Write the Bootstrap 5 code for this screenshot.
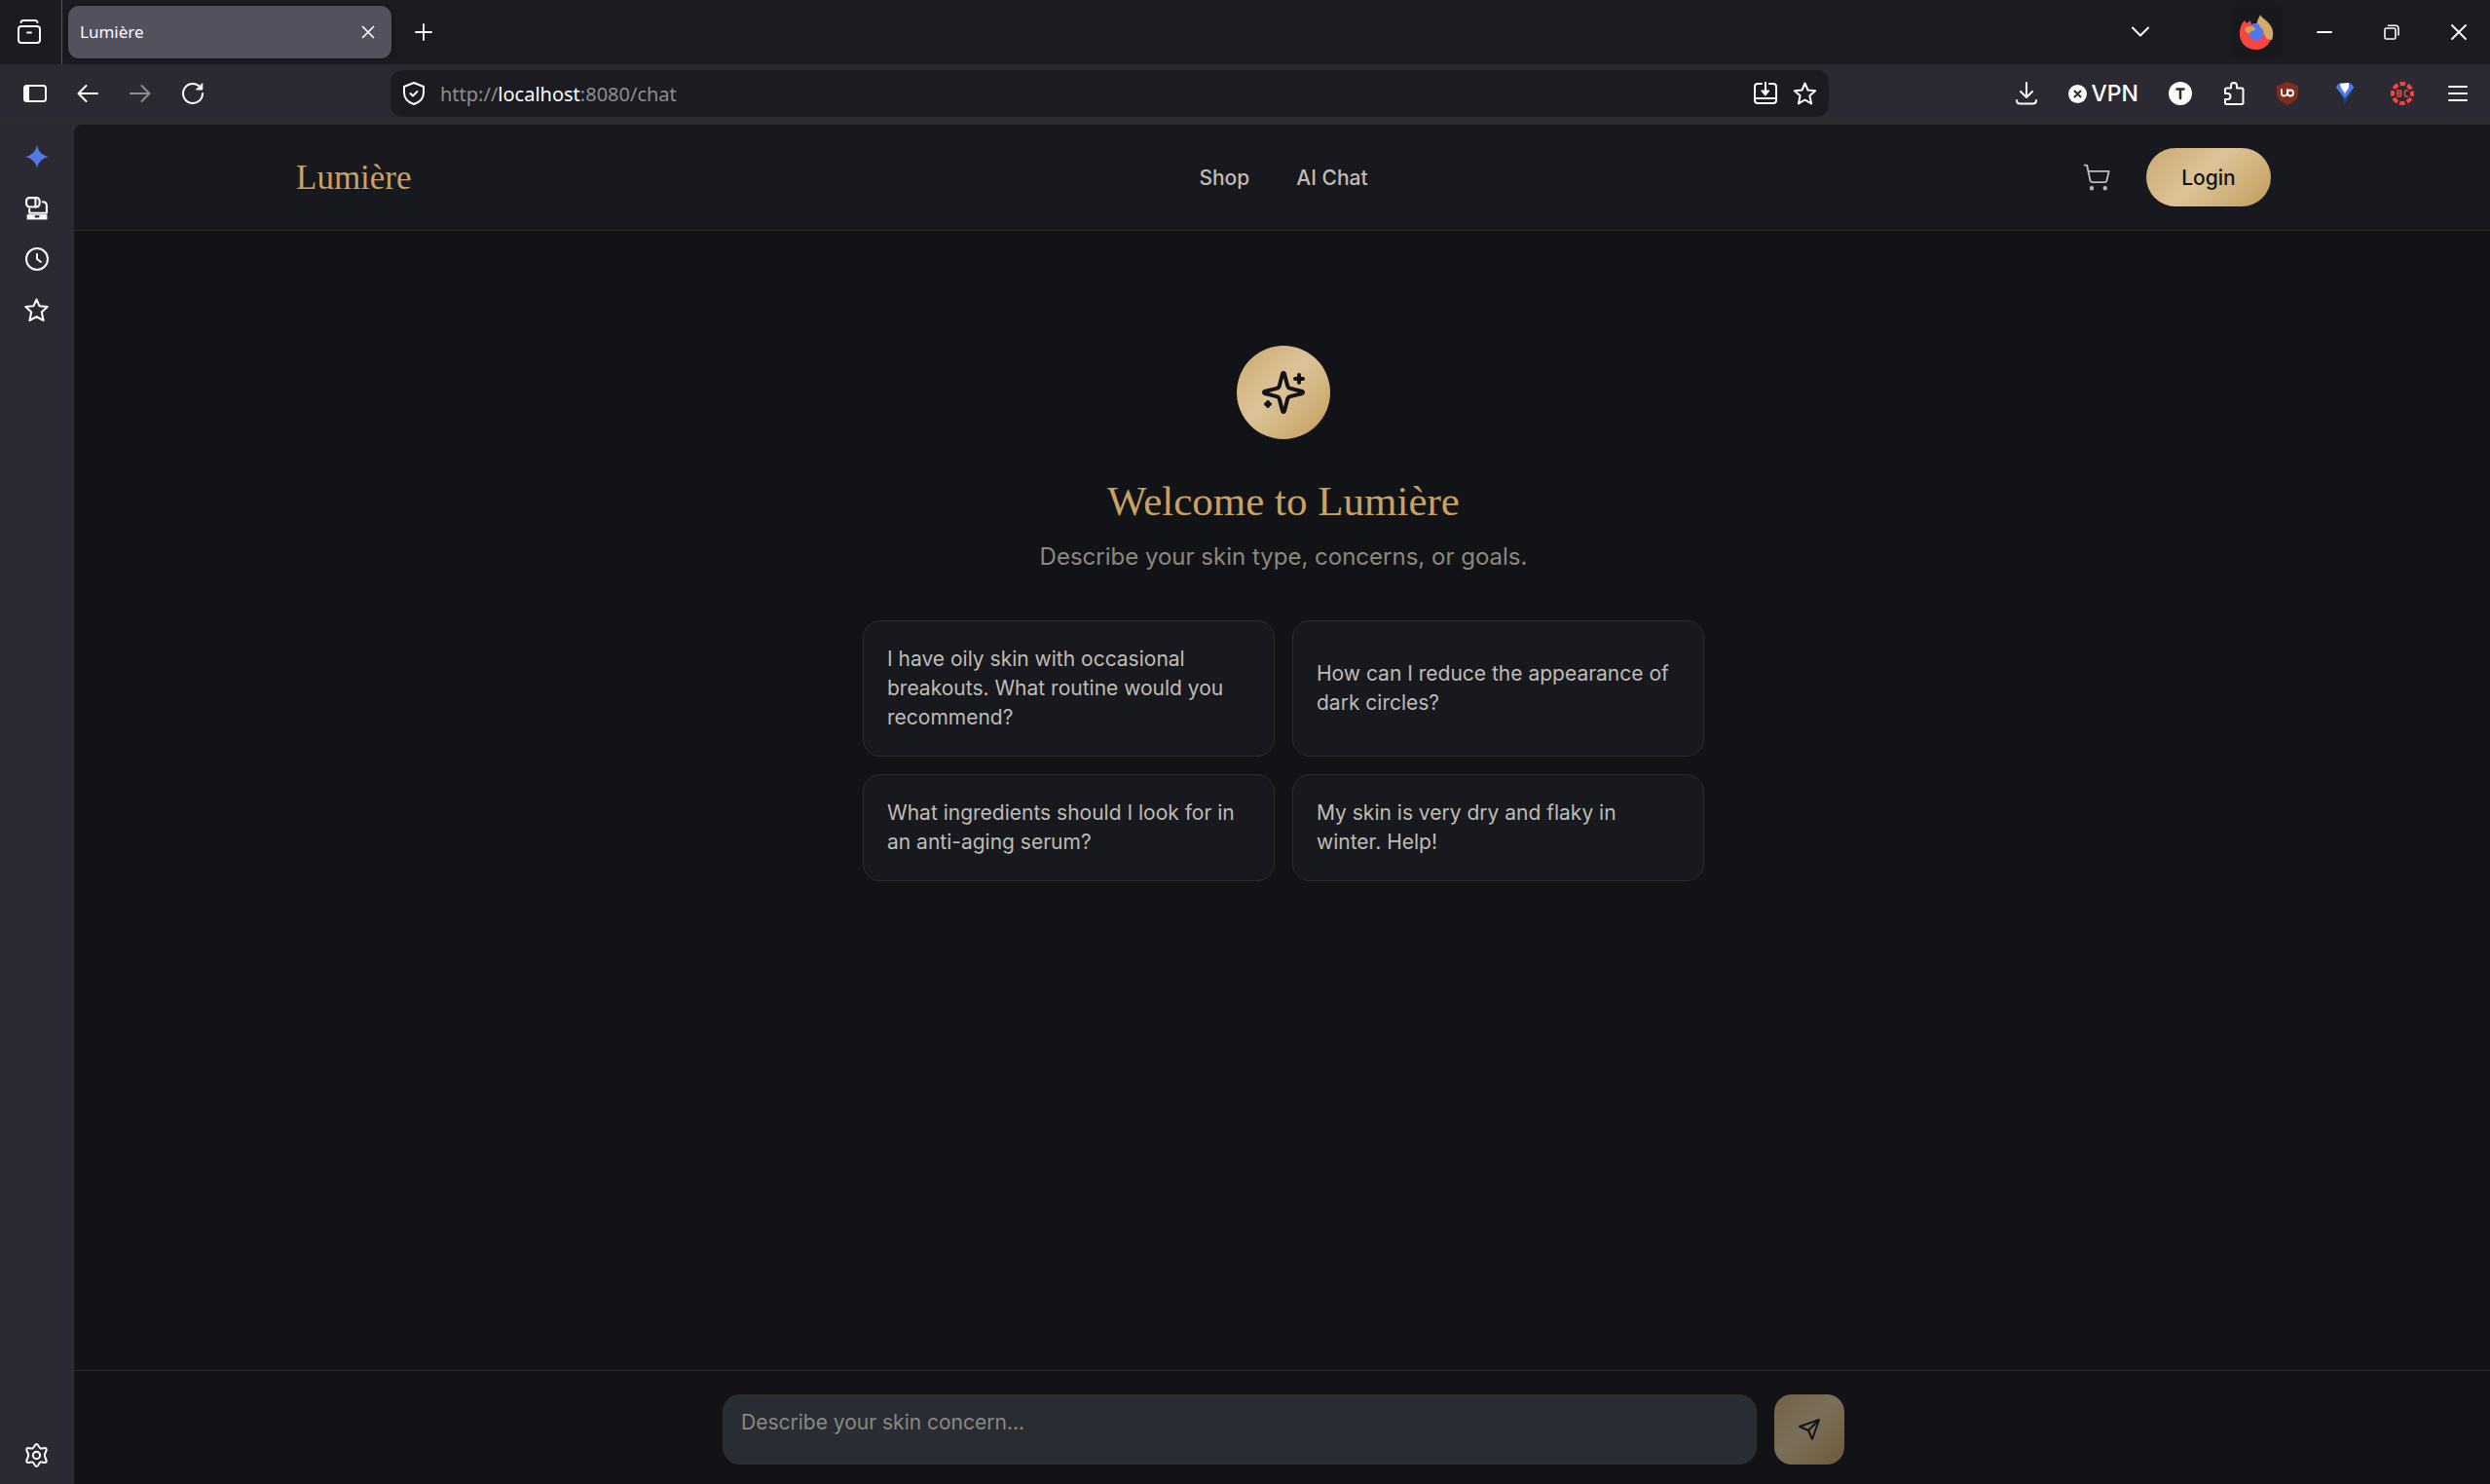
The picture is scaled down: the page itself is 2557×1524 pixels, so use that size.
<!DOCTYPE html>
<html lang="en" data-bs-theme="dark">
<head>
<meta charset="utf-8">
<meta name="viewport" content="width=device-width, initial-scale=1">
<title>Lumière</title>
<link href="https://cdn.jsdelivr.net/npm/bootstrap@5.3.0/dist/css/bootstrap.min.css" rel="stylesheet">
<style>
  :root { --gold: #c9a263; --edge: #2f2d2c; --chrome: #2b2a33; --ink: #121317; --panel: #18191e; --soft: #bfbcb5; --dim: #8d887f; }
  body { height: 100vh; overflow: hidden; background: var(--ink); color: var(--soft); font-family: Inter, "Noto Sans", sans-serif; font-size: 21px; line-height: 30px; }
  button { padding: 0; border: 0; background: none; color: inherit; }
  svg { display: block; fill: none; stroke: currentColor; stroke-linecap: round; stroke-linejoin: round; flex: none; }
  svg.solid-art { stroke: none; }
  svg.red-art { stroke: #f8453f; }
  .browser-ui { color: #fbfbfe; font-family: "Noto Sans", sans-serif; }
  .tab-strip { height: 66px; background: #1c1b22; }
  .tab-view { width: 64px; height: 66px; padding-right: 3px; border-right: 1px solid #52525e; }
  .tab-item { width: 332px; height: 54px; margin-left: 6px; padding: 0 17px 0 12px; border-radius: 11px; background: #52525e; font-size: 17px; box-shadow: 0 0 4px #0008; }
  .new-tab { margin-left: 24px; }
  .win-tools { gap: 53px; padding-right: 24px; }
  .fox-tile { width: 54px; height: 54px; margin-left: 30px; margin-right: -18px; border-radius: 9px; background: #18191d; }
  .tool-strip { height: 62px; background: var(--chrome); border-bottom: 2px solid #302d2e; }
  .nav-tools { width: 401px; gap: 30px; padding-left: 24px; }
  .url-field { width: 1477px; height: 48px; padding: 0 12px; border-radius: 12px; background: #1c1b22; font-size: 20px; }
  .url-text { margin-left: 15px; padding-top: 2px; color: #8f8d8b; }
  .url-text b { font-weight: 400; color: #fbfbfe; }
  .forward-btn { color: #8f8d8b; }
  .addons { gap: 31px; padding-right: 23px; }
  .vpn { font-family: Inter, sans-serif; font-weight: 500; gap: 5px; font-size: 23px; }
  .under-tools { background: var(--chrome); }
  .side-rail { width: 75px; background: var(--chrome); padding: 21px 0 17px; gap: 28px; color: #fbfbfe; }
  .site { background: var(--ink); min-width: 0; border-left: 1px solid #302d2e; border-top-left-radius: 9px; overflow: hidden; }
  .site-head { background: var(--panel); height: 109px; border-bottom: 1px solid var(--edge); padding-left: 3px; }
  .head-inner { width: 100%; max-width: 2028px; display: grid; grid-template-columns: 1fr auto 1fr; align-items: center; }
  .brand, .hero-title { font-family: "Liberation Serif", serif; color: var(--gold); }
  .brand { font-size: 35px; line-height: 48px; padding-top: 2px; }
  .site-nav { gap: 48px; font-weight: 500; padding-top: 2px; }
  .site-nav a { color: var(--soft); }
  .head-actions { gap: 36px; }
  .gold-fill { background: linear-gradient(135deg, #cca970 0%, #dcc398 45%, #d1b27d 70%, #c39a58 100%); color: var(--ink); }
  .login-btn { width: 128px; height: 60px; padding-top: 1px; font-weight: 500; }
  .hero { padding: 118px 0 0 3px; }
  .hero-mark { width: 96px; height: 96px; }
  .hero-title { font-size: 43px; line-height: 60px; margin: 34px 0 0; font-weight: 400; }
  .hero-sub { font-size: 24px; line-height: 36px; margin: 9px 0 47px; color: var(--dim); }
  .prompts { width: 100%; max-width: 864px; display: grid; grid-template-columns: 1fr 1fr; gap: 18px; }
  .prompt-btn { padding: 24px; border: 1px solid var(--edge); border-radius: 18px; background: var(--panel); text-align: left; }
  .composer { border-top: 1px solid #292829; padding: 24px 0 20px 3px; }
  .composer form { width: 100%; max-width: 1152px; gap: 18px; }
  .ask-box { height: 72px; padding: 13px 18px; border: 1px solid #33302f; border-radius: 18px; background: #282d33; color: var(--soft); font-size: 21px; line-height: 30px; resize: none; overflow: hidden; }
  .ask-box::placeholder { color: var(--dim); opacity: 1; }
  .send-btn { width: 72px; height: 72px; border-radius: 18px; opacity: .52; }
</style>
<script src="https://cdn.jsdelivr.net/npm/bootstrap@5.3.0/dist/js/bootstrap.bundle.min.js"></script>
</head>
<body class="d-flex flex-column">
<header class="browser-ui">
  <div class="tab-strip d-flex align-items-center">
    <button class="tab-view d-flex align-items-center justify-content-center" aria-label="Tab overview">
      <svg width="26" height="26" viewBox="0 0 26 26" stroke-width="2"><path d="M4.500 3q.5-2 2.500-2h12q2 0 2.500 2"/><rect x="2" y="7" width="22" height="17" rx="3"/><path d="M11 13.500h4"/></svg>
    </button>
    <div class="tab-item d-flex align-items-center justify-content-between">
      <span>Lumière</span>
      <button aria-label="Close tab"><svg width="14" height="14" viewBox="0 0 14 14" stroke-width="1.700"><path d="M1.500 1.500l11 11m0-11l-11 11"/></svg></button>
    </div>
    <button class="new-tab" aria-label="New tab"><svg width="18" height="18" viewBox="0 0 18 18" stroke-width="1.800"><path d="M9 1v16M1 9h16"/></svg></button>
    <div class="win-tools d-flex align-items-center ms-auto">
      <button aria-label="List tabs"><svg width="18" height="12" viewBox="0 0 18 12" stroke-width="2"><path d="M1 1.500l8 8 8-8"/></svg></button>
      <button class="fox-tile d-flex align-items-center justify-content-center" aria-label="Firefox">
        <svg class="solid-art" width="36" height="36" viewBox="0 0 36 36"><path d="M6 6l2 3 4-3 1 4 9-2 12 6c2 12-5 22-16 22S0 28 1 18C1 13 3 9 6 6z" fill="#f8453f"/><path d="M22 0c2 4 6 5 9 9 5 6 5 12 3 17l-5-1-5-8-5-7c-1-4 2-6 3-10z" fill="#d0a96b"/><circle cx="18" cy="19" r="7.500" fill="#5078e8"/><path d="M12 11c4-3 8-2 10 0-2 1-1 3-1 5l-9-1z" fill="#5078e8"/><path d="M6 14c5-4 11-2 11 1-1 2-5 1-6 5-3-1-5-3-5-6z" fill="#d0a060"/></svg>
      </button>
      <button aria-label="Minimize"><svg width="16" height="16" viewBox="0 0 16 16" stroke-width="2"><path d="M1 8h14"/></svg></button>
      <button aria-label="Restore"><svg width="16" height="16" viewBox="0 0 16 16" stroke-width="1.600"><rect x="1" y="4" width="11" height="11" rx="1.500"/><path d="M4.500 1.200H12q3 0 3 3V11"/></svg></button>
      <button aria-label="Close window"><svg width="16" height="16" viewBox="0 0 16 16" stroke-width="1.800"><path d="M1 1l14 14M15 1L1 15"/></svg></button>
    </div>
  </div>
  <div class="tool-strip d-flex align-items-center">
    <div class="nav-tools d-flex align-items-center">
      <button aria-label="Sidebar"><svg width="24" height="24" viewBox="0 0 24 24" stroke-width="2"><rect x="1" y="4" width="22" height="16" rx="2.500"/><path d="M2 5h4v14H2z" fill="currentColor" stroke="none"/></svg></button>
      <button aria-label="Back"><svg width="24" height="24" viewBox="0 0 24 24" stroke-width="2"><path d="M22 12H2.500M10.500 4l-8 8 8 8"/></svg></button>
      <button class="forward-btn" aria-label="Forward"><svg width="24" height="24" viewBox="0 0 24 24" stroke-width="2"><path d="M2 12h19.500M13.500 4l8 8-8 8"/></svg></button>
      <button aria-label="Reload"><svg width="24" height="24" viewBox="0 0 24 24" stroke-width="2"><path d="M22 12a10 10 0 1 1-4-8"/><path d="M21.800 2v6h-6z" fill="currentColor" stroke-width="1"/></svg></button>
    </div>
    <div class="url-field d-flex align-items-center">
      <svg width="24" height="24" viewBox="0 0 24 24" stroke-width="2"><path d="M12 1l10 4v6c0 6-4 10-10 12C6 21 2 17 2 11V5z"/><path d="M8.500 12l2.500 2.500 4.500-4.500"/></svg>
      <span class="url-text">http://<b>localhost</b>:8080/chat</span>
      <button class="ms-auto me-3" aria-label="Install page"><svg width="24" height="24" viewBox="0 0 24 24" stroke-width="2"><path d="M8 2H4Q1 2 1 5v14q0 3 3 3h16q3 0 3-3V5q0-3-3-3h-4M2 17h20M12 0v11"/><path d="M8 9h8l-4 5z" fill="currentColor" stroke-width="1"/></svg></button>
      <button aria-label="Bookmark"><svg width="25" height="24" viewBox="0 0 24 24" stroke-width="2"><path d="M12 1.500l3 7 7.700.7-5.800 5 1.700 8.200L12 18.500l-6.600 3.900 1.700-8.200-5.800-5L9 8.500z"/></svg></button>
    </div>
    <div class="addons d-flex align-items-center ms-auto">
      <button aria-label="Downloads"><svg width="24" height="24" viewBox="0 0 24 24" stroke-width="2"><path d="M12 1v15M6 10l6 6 6-6M2 19q0 3.500 3.500 3.500h13Q22 22.500 22 19"/></svg></button>
      <button class="vpn d-flex align-items-center"><svg width="19" height="19" viewBox="0 0 19 19" stroke-width="2"><circle cx="9.500" cy="9.500" r="9.500" fill="#fbfbfe" stroke="none"/><path d="M6.500 6.500l6 6m0-6l-6 6" stroke="#2b2a33"/></svg>VPN</button>
      <button aria-label="T"><svg width="24" height="24" viewBox="0 0 24 24" stroke-width="2.500"><circle cx="12" cy="12" r="12" fill="#fbfbfe" stroke="none"/><path d="M8.500 7.500h7M12 8v9" stroke="#2b2a33"/></svg></button>
      <button aria-label="Extensions"><svg width="24" height="24" viewBox="0 0 24 24" stroke-width="2"><path d="M3 10V8q0-1.500 1.500-1.500H9V4a3 3 0 0 1 6 0v2.500h5q1.500 0 1.500 1.500v13.500q0 1.500-1.500 1.500H4.500Q3 23 3 21.500V18h2.500a3 3 0 0 0 0-6H3z"/></svg></button>
      <button aria-label="uBlock"><svg width="24" height="24" viewBox="0 0 24 24" stroke-width="1.800"><path d="M12 0l11 4v8c0 6-5 9-11 12C6 21 1 18 1 12V4z" fill="#802d1b" stroke="none"/><path d="M6 8v4q0 2.500 2.500 2.500T12 12V8"/><circle cx="15" cy="11.500" r="3"/></svg></button>
      <button class="ms-1" aria-label="Gem"><svg class="solid-art" width="24" height="24" viewBox="0 0 24 24"><path d="M4 3l8-2 10 4-10 18z" fill="#174766"/><path d="M3 6q1-4 5-5h8q4 1 5 5l-9 11z" fill="#5078e8"/><path d="M7 2l9-1v5l-4 6-4-6z" fill="#fbfbfe"/></svg></button>
      <button class="ms-1" aria-label="BC"><svg class="red-art" width="24" height="24" viewBox="0 0 24 24"><circle cx="12" cy="12" r="10" stroke-width="4" stroke-linecap="butt" stroke-dasharray="5.500 2.354" stroke-dashoffset="2.750"/><path d="M7 9h3q2 1.500 0 3H7zm0 3h3q2 1.500 0 3H7zM17.500 9H15q-1.500 3 0 6h2.500" stroke-width="1.500"/></svg></button>
      <button class="ms-1" aria-label="Menu"><svg width="20" height="20" viewBox="0 0 20 20" stroke-width="2"><path d="M1 3h18M1 10h18M1 17h18"/></svg></button>
    </div>
  </div>
</header>
<div class="under-tools d-flex flex-grow-1">
  <aside class="side-rail d-flex flex-column align-items-center flex-shrink-0">
    <button aria-label="Assistant"><svg class="solid-art" width="24" height="24" viewBox="0 0 24 24"><path d="M12 0q2 10 12 12-10 2-12 12Q10 14 0 12 10 10 12 0z" fill="#5078e8"/></svg></button>
    <button aria-label="Synced tabs"><svg width="25" height="25" viewBox="0 0 24 24" stroke-width="2"><rect x="2" y="2" width="13" height="9" rx="3"/><path d="M11 3v8M18 6q4 0 4 4v7H5v-4"/><path d="M3 19h19v4H3z" fill="currentColor" stroke-width="1"/><path d="M11 20.500h3" stroke="#2b2a33"/></svg></button>
    <button aria-label="History"><svg width="24" height="24" viewBox="0 0 24 24" stroke-width="2"><circle cx="12" cy="12" r="11"/><path d="M12 7v5l4 3"/></svg></button>
    <button aria-label="Bookmarks"><svg width="25" height="25" viewBox="0 0 24 24" stroke-width="2"><path d="M12 1.500l3 6.500 7.700.7-5.600 5.300 1.700 8.200L12 18.500l-6.800 3.700 1.700-8.200-5.600-5.300L9 8z"/></svg></button>
    <button class="mt-auto" aria-label="Settings"><svg width="25" height="25" viewBox="0 0 24 24" stroke-width="2"><path d="M12 1c2 0 2 3.500 4 4.200s4.500-1.700 5.600.3S20 9.500 20 12s2.600 4.500 1.600 6.500-3.600-.4-5.600.3-2 4.200-4 4.200-2-3.500-4-4.200-4.600 1.700-5.600-.3S4 14.500 4 12 1.400 7.500 2.400 5.500 6 5.900 8 5.200 10 1 12 1z"/><circle cx="12" cy="12" r="3.500"/></svg></button>
  </aside>
  <div class="site d-flex flex-column flex-grow-1">
    <div class="site-head d-flex justify-content-center">
      <div class="head-inner">
        <a class="brand text-decoration-none" href="#">Lumière</a>
        <nav class="site-nav d-flex"><a class="text-decoration-none" href="#">Shop</a><a class="text-decoration-none" href="#">AI Chat</a></nav>
        <div class="head-actions d-flex align-items-center justify-content-end">
          <button aria-label="Cart"><svg width="30" height="30" viewBox="0 0 24 24" stroke-width="1.500"><circle cx="8" cy="21" r="1"/><circle cx="19" cy="21" r="1"/><path d="M2.050 2.050h2l2.660 12.420a2 2 0 0 0 2 1.580h9.780a2 2 0 0 0 1.950-1.570l1.650-7.430H5.120"/></svg></button>
          <button class="login-btn gold-fill rounded-pill">Login</button>
        </div>
      </div>
    </div>
    <main class="hero d-flex flex-column align-items-center flex-grow-1">
      <div class="hero-mark gold-fill rounded-circle d-flex align-items-center justify-content-center">
        <svg width="48" height="48" viewBox="0 0 24 24" stroke-width="2"><path d="M9.937 15.500A2 2 0 0 0 8.500 14.063l-6.135-1.582a.5.5 0 0 1 0-.962L8.500 9.936A2 2 0 0 0 9.937 8.500l1.582-6.135a.5.5 0 0 1 .963 0L14.063 8.500A2 2 0 0 0 15.500 9.937l6.135 1.581a.5.5 0 0 1 0 .964L15.500 14.063a2 2 0 0 0-1.437 1.437l-1.582 6.135a.5.5 0 0 1-.963 0z"/><path d="M20 3v4M22 5h-4M4 17v2M5 18H3"/></svg>
      </div>
      <h1 class="hero-title">Welcome to Lumière</h1>
      <p class="hero-sub">Describe your skin type, concerns, or goals.</p>
      <div class="prompts">
        <button class="prompt-btn">I have oily skin with occasional breakouts. What routine would you recommend?</button>
        <button class="prompt-btn">How can I reduce the appearance of dark circles?</button>
        <button class="prompt-btn">What ingredients should I look for in an anti-aging serum?</button>
        <button class="prompt-btn">My skin is very dry and flaky in winter. Help!</button>
      </div>
    </main>
    <footer class="composer d-flex justify-content-center">
      <form class="d-flex">
        <textarea class="ask-box flex-grow-1" rows="1" aria-label="Describe your skin concern" placeholder="Describe your skin concern..."></textarea>
        <button class="send-btn gold-fill d-flex align-items-center justify-content-center" type="button" aria-label="Send"><svg width="24" height="24" viewBox="0 0 24 24" stroke-width="2"><path d="M22 2L15 22l-4-9-9-4zM22 2L11 13"/></svg></button>
      </form>
    </footer>
  </div>
</div>
</body>
</html>
